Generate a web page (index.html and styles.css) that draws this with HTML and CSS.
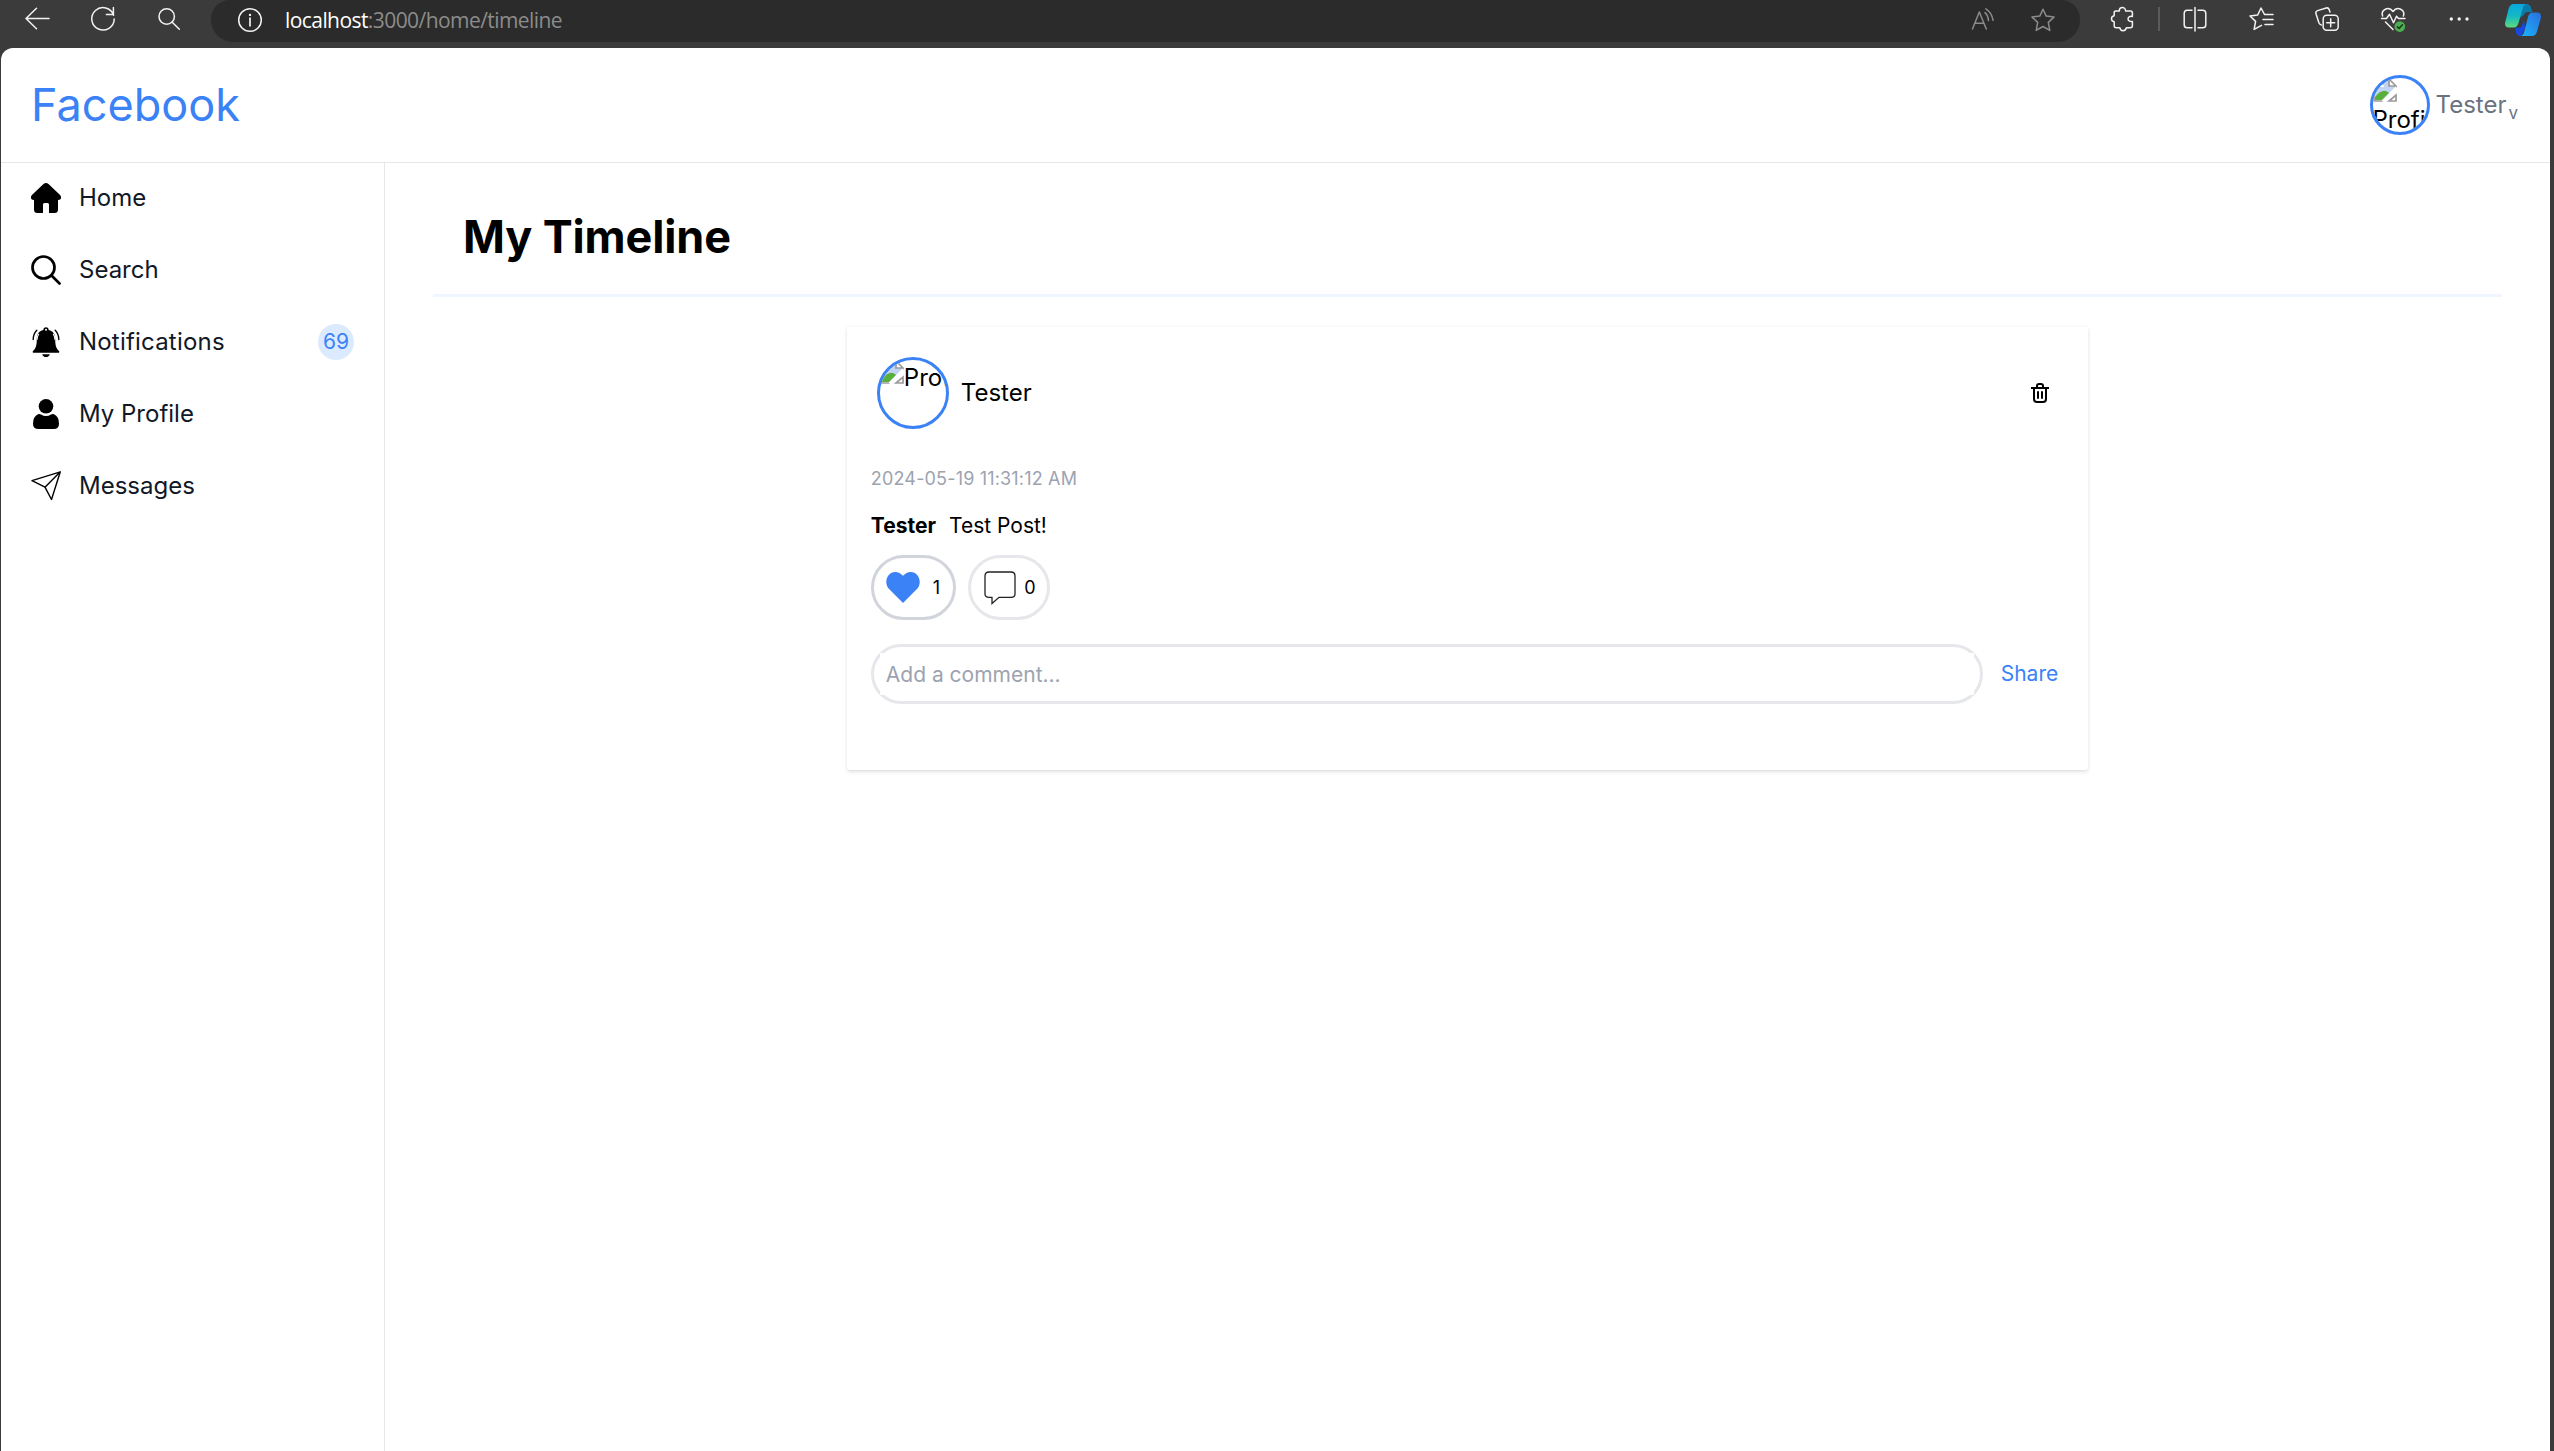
FILE: index.html
```html
<!DOCTYPE html>
<html lang="en">
<head>
<meta charset="utf-8">
<title>Timeline</title>
<link rel="stylesheet" href="styles.css">
</head>
<body>
<div class="toolbar">
  <div class="nav-tools">
    <svg class="tool" viewBox="0 0 24 24"><path d="M24 11.5H1M11.5 1.2L1 11.5l10.5 10.3"/></svg>
    <svg class="tool" viewBox="0 0 24 24"><path d="M22.6 8.2A11.2 11.2 0 1 0 23.2 12M22.4.5v7h-7"/></svg>
    <svg class="tool" viewBox="0 0 24 24"><circle cx="9.7" cy="9.5" r="7.7"/><path d="M15 15l7.3 7.3"/></svg>
  </div>
  <div class="address">
    <svg class="tool" viewBox="0 0 24 24"><circle cx="12" cy="12" r="11.3"/><path d="M12 10.2v7.6" stroke-width="1.7"/><circle class="solid" cx="12" cy="6.9" r="1.2"/></svg>
    <span class="url"><b>localhost</b>:3000/home/timeline</span>
    <svg class="tool dim" viewBox="0 0 24 24"><path d="M1.500 21L8.300 4l7 17M4.100 15.300h8.800M14 4.600c2.200 1.900 3.200 4.500 3.500 8M14.800.8c4 2.400 6.300 5.800 7.300 11.500"/></svg>
    <svg class="tool dim star" viewBox="0 0 24 24"><path d="M12 1.200l3.200 6.900 7.800 1-5.700 5.300 1.500 8-6.800-3.900-6.800 3.900 1.500-8L1 9.100l7.800-1z"/></svg>
  </div>
  <div class="actions">
    <svg class="tool" viewBox="0 0 24 24"><path d="M3.200 5.600q0-1.700 1.700-1.700h3.400c0-4.400 6.300-4.400 6.300 0h4.800q2 0 2 2v3.600c-5.800-1.300-5.800 6 0 5v4.200q0 2-2 2h-4c-1 4-6 4-6.600 0H5.200q-2 0-2-2v-3.900c-3.600-.8-3.600-5.300 0-6z"/></svg>
    <span class="divider"></span>
    <svg class="tool" viewBox="0 0 24 24"><path d="M9 3.200H4.300Q1.200 3.200 1.200 6.300v11.400q0 3.100 3.100 3.100H9M15 3.200h4.700q3.100 0 3.100 3.100v11.400q0 3.100-3.100 3.100H15M12 .5v23.500"/></svg>
    <svg class="tool" viewBox="0 0 24 24"><path d="M15.500 7.500L12 1 8.700 8 1 9l5.600 5.400-1.500 8 7.400-4M16 7.500h8M14 12.500h10M16 17.500h8"/></svg>
    <svg class="tool" viewBox="0 0 24 24"><rect x="8.200" y="8.200" width="15" height="15" rx="3.500"/><path d="M15.700 11.700v8M11.700 15.700h8M15 5l-.9-2.600q-.8-2-2.900-1.400L2.600 3.600Q.4 4.400.9 6.600l3 9.200q.8 2 2.500 2.100"/></svg>
    <svg class="tool" viewBox="0 0 24 24"><path d="M1.600 9C-.4 3 7.500-1.500 12 4.500 16.500-1.500 24.500 3 22.400 9M.500 11.500h5l3-4.200 4 8.500 3-6.500 2 2.200H24M4.500 15l7.500 7.500"/><circle cx="18.800" cy="19.600" r="5.300" fill="#4caf50" stroke="none"/><path class="check" d="M16.300 19.700l1.800 1.700 3.300-3.700"/></svg>
    <svg class="tool" viewBox="0 0 24 24"><g class="solid"><circle cx="4.300" cy="12" r="1.700"/><circle cx="12.200" cy="12" r="1.700"/><circle cx="20" cy="12" r="1.700"/></g></svg>
    <svg class="copilot" viewBox="0 0 36 32">
      <defs>
        <linearGradient id="left" x1="0" y1="0" x2="0" y2="1"><stop offset="0" stop-color="#0aa5e0"/><stop offset=".5" stop-color="#14b8c4"/><stop offset="1" stop-color="#5ddc7c"/></linearGradient>
        <linearGradient id="right" x1="1" y1="0" x2="0" y2="1"><stop offset="0" stop-color="#2b6ee0"/><stop offset="1" stop-color="#19b6fa"/></linearGradient>
      </defs>
      <path fill="#0a7ba8" d="M15 0h6.500Q25 0 26 3.500L27.300 8h-4q-3.500 0-4.500 3l-4 3z"/>
      <path fill="#1748e0" d="M10 23.500h6l3-8 1 9-4 7.500h-1.500q-2.500 0-3.300-2.800z"/>
      <path fill="url(#left)" d="M8.500 0H22q-3 0-4 3.500L13.500 19q-1.300 4.500-5 4.500H4Q-1 23.500.3 18L3.700 4.500Q5 0 8.500 0z"/>
      <path fill="url(#right)" d="M27.300 8.500h4.500q5 0 4 5.500L32 27.500Q30.700 32 27 32H15q3 0 4.200-4L23 13q1.200-4.500 4.300-4.500z"/>
    </svg>
  </div>
</div>

<div class="page">
  <header class="header">
    <a class="brand">Facebook</a>
    <div class="account">
      <span class="avatar avatar-small">
        <svg class="broken" viewBox="0 0 24 24"><use href="#missing"/></svg><span class="alt">Profile</span>
      </span>
      <span class="account-name">Tester</span><span class="caret">v</span>
    </div>
  </header>

  <div class="body">
    <nav class="sidebar">
      <a class="item"><svg viewBox="0 0 30 30"><path d="M12.500 1Q15-1 17.500 1L28.800 11.800Q31.200 14.300 29.400 16.300 28.700 17 27 17v9.500q0 3.500-3.500 3.500H18v-8.500q0-1.500-1.500-1.500h-3q-1.500 0-1.500 1.500V30H6.500Q3 30 3 26.500V17q-1.700 0-2.400-.7-1.800-2 .6-4.500z"/></svg><span>Home</span></a>
      <a class="item"><svg viewBox="0 0 30 30"><g fill="none" stroke="#000" stroke-width="2.700" stroke-linecap="round"><circle cx="12.500" cy="12.500" r="11"/><path d="M20.500 20.500l8 8"/></g></svg><span>Search</span></a>
      <a class="item"><svg viewBox="0 0 30 30"><path d="M15 .3q2.500 0 2.700 2.700c4.500 1.200 6.500 4 6.500 9 0 6.500 1 9.500 3.800 12 .7 1 .3 1.800-.8 1.800H2.800C1.700 25.800 1.300 25 2 24c2.800-2.500 3.800-5.500 3.800-12 0-5 2-7.800 6.500-9Q12.500.3 15 .3zM11.200 27.200h7.600Q18 30 15 30t-3.800-2.800z"/><circle cx="15" cy="2.800" r="1" fill="#fff"/><path fill="none" stroke="#fff" stroke-width="1.200" d="M7.800 6.800q-1.600 2.500-1.700 6M22.200 6.800q1.600 2.500 1.700 6"/><path fill="none" stroke="#000" stroke-width="1.400" stroke-linecap="round" d="M5.800 3.300Q2.300 7 2.200 12.500M24.200 3.300q3.500 3.700 3.600 9.200"/></svg><span class="wide">Notifications</span><span class="count">69</span></a>
      <a class="item"><svg viewBox="0 0 30 30"><circle cx="15" cy="7.300" r="7.300"/><path d="M7 15.200q1.500-.6 3 .4 5 3 10 0 1.500-1 3-.4 5 2.300 5 9.500 0 5.300-5.300 5.300H7.500Q2 30 2 24.700q0-7.200 5-9.500z"/></svg><span>My Profile</span></a>
      <a class="item"><svg viewBox="0 0 30 30"><path fill="none" stroke="#000" stroke-width="1.400" stroke-linejoin="round" d="M29.300.8L1 9.700l13 6.500L20.500 28.500zM29.300.8L14 16.200"/></svg><span>Messages</span></a>
    </nav>

    <main class="main">
      <h1 class="title">My Timeline</h1>
      <article class="card">
        <div class="card-head">
          <span class="avatar avatar-large">
            <svg class="broken" viewBox="0 0 24 24"><use href="#missing"/></svg><span class="alt">Profile</span>
          </span>
          <span class="author">Tester</span>
          <svg class="trash" viewBox="0 0 18 20"><path d="M0 5h18M6 4.500V3q0-2 2-2h2q2 0 2 2v1.500M3 5v11q0 3 3 3h6q3 0 3-3V5M7 8.300v7.400M11 8.300v7.400"/></svg>
        </div>
        <time class="date">2024-05-19 11:31:12 AM</time>
        <p class="text"><b>Tester</b><span>Test Post!</span></p>
        <div class="reactions">
          <button class="pill liked"><svg width="34" height="31" viewBox="0 0 34 31"><path fill="#3b82f6" d="M17 31L2.800 16.800C-4 9 4-4.500 14.500 1.700L17 3.800l2.500-2.100C30-4.500 38 9 31.200 16.800z"/></svg>1</button>
          <button class="pill"><svg width="32" height="34" viewBox="0 0 32 34"><path fill="none" stroke="#222" stroke-width="1.300" d="M5 1h22q4 0 4 4v18q0 3.300-4 3.300H15L8 32.500v-6.200H5Q1 26.300 1 23V5Q1 1 5 1z"/></svg>0</button>
        </div>
        <form class="comment">
          <div class="field"><input type="text" placeholder="Add a comment..."></div>
          <button type="button" class="share">Share</button>
        </form>
      </article>
    </main>
  </div>
</div>

<svg width="0" height="0" class="defs">
  <symbol id="missing" viewBox="0 0 24 24">
    <path fill="#c3d3f2" d="M2 2h14v6h6v4L11 22H2z"/>
    <path fill="#fff" d="M5 9q0-3 3-2 3-1 3 2z"/>
    <path fill="#58b03c" d="M2 22v-3q8-10 14-4l1 1-6 6z"/>
    <path fill="none" stroke="#9a9a9a" stroke-width="1.700" d="M1 23V1h15l7 7v3M16 1v7h7M1 23h9M16 23h7v-6z"/>
    <path fill="none" stroke="#fff" stroke-width="4" d="M24 10L10 24"/>
  </symbol>
</svg>
</body>
</html>
```
FILE: styles.css
```css
* { box-sizing: border-box; }
body {
  margin: 0;
  height: 1451px;
  overflow: hidden;
  display: flex;
  flex-direction: column;
  background: #3b3b3b;
  color: #000;
  font-family: Inter, "Liberation Sans", sans-serif;
  font-size: 24px;
  line-height: 36px;
}
button, input { font: inherit; color: inherit; background: none; border: 0; padding: 0; }
.defs { position: absolute; }

/* browser toolbar */
.toolbar { height: 48px; flex: none; display: flex; align-items: flex-start; }
.tool { width: 24px; height: 24px; flex: none; overflow: visible; fill: none; stroke: #f2f2f2; stroke-width: 1.5; stroke-linejoin: round; stroke-linecap: round; }
.tool .solid { fill: #f2f2f2; stroke: none; }
.tool .check { stroke: #20341f; }
.tool.dim { stroke: #8c8c8c; }
.nav-tools { width: 211px; padding: 7px 0 0 25px; display: flex; gap: 42px; }
.address {
  width: 1869px;
  height: 42px;
  padding: 7px 25px 10px 27px;
  display: flex;
  align-items: center;
  background: #2b2b2b;
  border-radius: 19px 19px 22px 22px;
}
.url { flex: 1; margin-left: 23px; font: 21px/26px "Open Sans", "Noto Sans", sans-serif; letter-spacing: -0.570px; color: #8c8c8c; }
.url b { font-weight: 400; color: #fff; }
.star { margin-left: 36px; }
.actions { padding: 7px 0 0 31px; display: flex; gap: 42px; }
.divider { width: 2px; height: 24px; margin: 0 -19px; background: #5b5b5b; }
.copilot { width: 36px; height: 32px; margin: -3px 0 0 -8px; }

/* page shell */
.page { flex: 1; margin: 0 4px 0 1px; display: flex; flex-direction: column; background: #fff; border-radius: 12px 12px 0 0; }
.header { height: 115px; padding: 0 32px 0 30px; display: flex; align-items: center; justify-content: space-between; border-bottom: 1px solid #e5e7eb; }
.brand { font-size: 45px; line-height: 54px; color: #3b82f6; }
.account { display: flex; align-items: center; color: #6b7280; }
.account-name { margin-left: 6px; }
.caret { font-size: 17px; line-height: 24px; margin: 16px 0 0 2px; }
.avatar { flex: none; overflow: hidden; border: 3px solid #3b82f6; border-radius: 50%; color: #000; display: flex; }
.avatar-small { width: 60px; height: 60px; flex-direction: column; }
.avatar-large { width: 72px; height: 72px; }
.broken { width: 24px; height: 24px; flex: none; }
.avatar-small .alt { line-height: 36px; }
.body { flex: 1; display: flex; }

.sidebar { width: 384px; padding: 0 30px; border-right: 1px solid #e5e7eb; }
.item { height: 72px; display: flex; align-items: center; color: #111827; }
.item:first-child { height: 71px; padding-bottom: 1px; }
.item svg { width: 30px; height: 30px; flex: none; margin-right: 18px; }
.wide { letter-spacing: 0.200px; }
.count { width: 36px; height: 36px; margin-left: auto; border-radius: 50%; background: #dbeafe; color: #3b82f6; font-size: 21px; text-align: center; }

/* timeline */
.main { flex: 1; padding: 0 48px; }
.title { margin: 0; padding: 47px 30px 30px; border-bottom: 3px solid #eff6ff; font-size: 45px; line-height: 54px; font-weight: 700; letter-spacing: -0.150px; }
.card { width: 60%; height: 443px; margin: 30px auto 0; padding: 0 24px; border-radius: 3px; box-shadow: 0 1.500px 4.500px rgba(0,0,0,.1), 0 1.500px 3px -1.500px rgba(0,0,0,.1); }
.card-head { padding: 30px 6px 38px; display: flex; align-items: center; }
.author { margin-left: 12px; }
.trash { width: 18px; height: 20px; margin: 0 9px 0 auto; fill: none; stroke: #000; stroke-width: 2; }
.date { display: block; font-size: 18px; line-height: 24px; letter-spacing: 0.170px; color: #9ca3af; }
.text { margin: 20px 0 14px; display: flex; gap: 13px; font-size: 21px; line-height: 30px; }
.reactions { display: flex; gap: 12px; }
.pill { height: 65px; padding: 0 12px 0 13px; border: 3px solid #e5e7eb; border-radius: 36px; display: flex; align-items: center; gap: 8px; font-size: 18px; }
.pill.liked { padding: 0 13px 0 12px; gap: 13px; border-color: #d1d5db; }
.comment { margin-top: 24px; display: flex; align-items: center; gap: 18px; }
.field { flex: 1; height: 60px; padding: 6px; border: 3px solid #e5e7eb; border-radius: 36px; }
.field input { display: block; width: 100%; height: 42px; padding: 0 6px; background: #fff; font-size: 21px; line-height: 30px; }
.field input::placeholder { color: #9ca3af; opacity: 1; }
.share { margin-right: 6px; font-size: 21px; color: #3b82f6; }
```
